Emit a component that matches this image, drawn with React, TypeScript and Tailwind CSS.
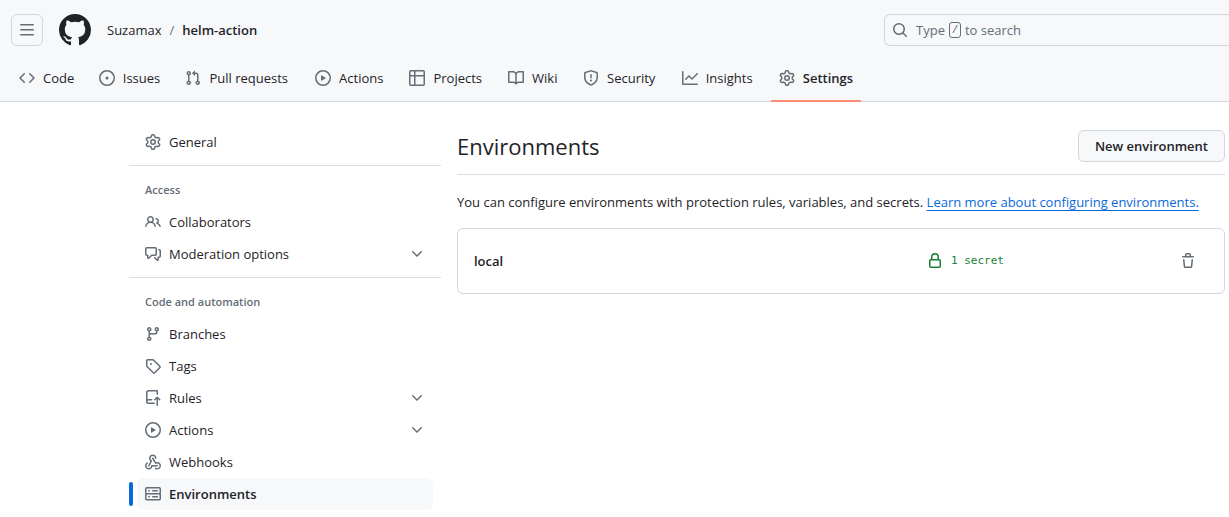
import type { ReactNode } from "react";

const paths = {
  bars: "M1 2.75A.75.75 0 0 1 1.75 2h12.5a.75.75 0 0 1 0 1.5H1.75A.75.75 0 0 1 1 2.75Zm0 5A.75.75 0 0 1 1.75 7h12.5a.75.75 0 0 1 0 1.5H1.75A.75.75 0 0 1 1 7.75ZM1.75 12h12.5a.75.75 0 0 1 0 1.5H1.75a.75.75 0 0 1 0-1.5Z",
  github: "M8 0c4.42 0 8 3.58 8 8a8.013 8.013 0 0 1-5.45 7.59c-.4.08-.55-.17-.55-.38 0-.27.01-1.13.01-2.2 0-.75-.25-1.23-.54-1.48 1.78-.2 3.65-.88 3.65-3.95 0-.88-.31-1.59-.82-2.15.08-.2.36-1.02-.08-2.12 0 0-.67-.22-2.2.82-.64-.18-1.32-.27-2-.27-.68 0-1.36.09-2 .27-1.53-1.03-2.2-.82-2.2-.82-.44 1.1-.16 1.92-.08 2.12-.51.56-.82 1.28-.82 2.15 0 3.06 1.86 3.75 3.64 3.95-.23.2-.44.55-.51 1.07-.46.21-1.61.55-2.33-.66-.15-.24-.6-.83-1.23-.82-.67.01-.27.38.01.53.34.19.73.9.82 1.13.16.45.68 1.31 2.69.94 0 .67.01 1.3.01 1.49 0 .21-.15.45-.55.38A7.995 7.995 0 0 1 0 8c0-4.42 3.58-8 8-8Z",
  search: "M10.68 11.74a6 6 0 0 1-7.922-8.982 6 6 0 0 1 8.982 7.922l3.04 3.04a.749.749 0 0 1-.326 1.275.749.749 0 0 1-.734-.215ZM11.5 7a4.499 4.499 0 1 0-8.997 0A4.499 4.499 0 0 0 11.5 7Z",
  code: "m11.28 3.22 4.25 4.25a.75.75 0 0 1 0 1.06l-4.25 4.25a.749.749 0 0 1-1.275-.326.749.749 0 0 1 .215-.734L13.94 8l-3.72-3.72a.749.749 0 0 1 .326-1.275.749.749 0 0 1 .734.215Zm-6.56 0a.751.751 0 0 1 1.042.018.751.751 0 0 1 .018 1.042L2.06 8l3.72 3.72a.749.749 0 0 1-.326 1.275.749.749 0 0 1-.734-.215L.47 8.53a.75.75 0 0 1 0-1.06Z",
  issue: "M8 9.5a1.5 1.5 0 1 0 0-3 1.5 1.5 0 0 0 0 3ZM8 0a8 8 0 1 1 0 16A8 8 0 0 1 8 0ZM1.5 8a6.5 6.5 0 1 0 13 0 6.5 6.5 0 0 0-13 0Z",
  pull: "M1.5 3.25a2.25 2.25 0 1 1 3 2.122v5.256a2.251 2.251 0 1 1-1.5 0V5.372A2.25 2.25 0 0 1 1.5 3.25Zm5.677-.177L9.573.677A.25.25 0 0 1 10 .854V2.5h1A2.5 2.5 0 0 1 13.5 5v5.628a2.251 2.251 0 1 1-1.5 0V5a1 1 0 0 0-1-1h-1v1.646a.25.25 0 0 1-.427.177L7.177 3.427a.25.25 0 0 1 0-.354ZM3.75 2.5a.75.75 0 1 0 0 1.5.75.75 0 0 0 0-1.5Zm0 9.5a.75.75 0 1 0 0 1.5.75.75 0 0 0 0-1.5Zm8.25.75a.75.75 0 1 0 1.5 0 .75.75 0 0 0-1.5 0Z",
  play: "M8 0a8 8 0 1 1 0 16A8 8 0 0 1 8 0ZM1.5 8a6.5 6.5 0 1 0 13 0 6.5 6.5 0 0 0-13 0Zm4.879-2.773 4.264 2.559a.25.25 0 0 1 0 .428l-4.264 2.559A.25.25 0 0 1 6 10.559V5.442a.25.25 0 0 1 .379-.215Z",
  table: "M0 1.75C0 .784.784 0 1.75 0h12.5C15.216 0 16 .784 16 1.75v12.5A1.75 1.75 0 0 1 14.25 16H1.75A1.75 1.75 0 0 1 0 14.25ZM6.5 6.5v8h7.75a.25.25 0 0 0 .25-.25V6.5Zm8-1.5V1.75a.25.25 0 0 0-.25-.25H6.5V5Zm-13 1.5v7.75c0 .138.112.25.25.25H5v-8ZM5 5V1.5H1.75a.25.25 0 0 0-.25.25V5Z",
  book: "M0 1.75A.75.75 0 0 1 .75 1h4.253c1.227 0 2.317.59 3 1.501A3.743 3.743 0 0 1 11.006 1h4.245a.75.75 0 0 1 .75.75v10.5a.75.75 0 0 1-.75.75h-4.507a2.25 2.25 0 0 0-1.591.659l-.622.621a.75.75 0 0 1-1.06 0l-.622-.621A2.25 2.25 0 0 0 5.258 13H.75a.75.75 0 0 1-.75-.75Zm7.251 10.324.004-5.073-.002-2.253A2.25 2.25 0 0 0 5.003 2.5H1.5v9h3.757a3.75 3.75 0 0 1 1.994.574ZM8.755 4.75l-.004 7.322a3.752 3.752 0 0 1 1.992-.572H14.5v-9h-3.495a2.25 2.25 0 0 0-2.25 2.25Z",
  shield: "M7.467.133a1.748 1.748 0 0 1 1.066 0l5.25 1.68A1.75 1.75 0 0 1 15 3.48V7c0 1.566-.32 3.182-1.303 4.682-.983 1.498-2.585 2.813-5.032 3.855a1.697 1.697 0 0 1-1.33 0c-2.447-1.042-4.049-2.357-5.032-3.855C1.32 10.182 1 8.566 1 7V3.48a1.75 1.75 0 0 1 1.217-1.667Zm.61 1.429a.25.25 0 0 0-.153 0l-5.25 1.68a.25.25 0 0 0-.174.238V7c0 1.358.275 2.666 1.057 3.86.784 1.194 2.121 2.34 4.366 3.297a.196.196 0 0 0 .154 0c2.245-.956 3.582-2.104 4.366-3.298C13.225 9.666 13.5 8.36 13.5 7V3.48a.251.251 0 0 0-.174-.237l-5.25-1.68ZM8.75 4.75v3a.75.75 0 0 1-1.5 0v-3a.75.75 0 0 1 1.5 0ZM9 10.5a1 1 0 1 1-2 0 1 1 0 0 1 2 0Z",
  graph: "M1.5 1.75V13.5h13.75a.75.75 0 0 1 0 1.5H.75a.75.75 0 0 1-.75-.75V1.75a.75.75 0 0 1 1.5 0Zm14.28 2.53-5.25 5.25a.75.75 0 0 1-1.06 0L7 7.06 4.28 9.78a.751.751 0 0 1-1.042-.018.751.751 0 0 1-.018-1.042l3.25-3.25a.75.75 0 0 1 1.06 0L10 7.94l4.72-4.72a.751.751 0 0 1 1.042.018.751.751 0 0 1 .018 1.042Z",
  gear: "M8 0a8.2 8.2 0 0 1 .701.031C9.444.095 9.99.645 10.16 1.29l.288 1.107c.018.066.079.158.212.224.231.114.454.243.668.386.123.082.233.09.299.071l1.103-.303c.644-.176 1.392.021 1.82.63.27.385.506.792.704 1.218.315.675.111 1.422-.364 1.891l-.814.806c-.049.048-.098.147-.088.294.016.257.016.515 0 .772-.01.147.038.246.088.294l.814.806c.475.469.679 1.216.364 1.891a7.977 7.977 0 0 1-.704 1.217c-.428.61-1.176.807-1.82.63l-1.102-.302c-.067-.019-.177-.011-.3.071a5.909 5.909 0 0 1-.668.386c-.133.066-.194.158-.211.224l-.29 1.106c-.168.646-.715 1.196-1.458 1.26a8.006 8.006 0 0 1-1.402 0c-.743-.064-1.289-.614-1.458-1.26l-.289-1.106c-.018-.066-.079-.158-.212-.224a5.738 5.738 0 0 1-.668-.386c-.123-.082-.233-.09-.299-.071l-1.103.303c-.644.176-1.392-.021-1.82-.63a8.12 8.12 0 0 1-.704-1.218c-.315-.675-.111-1.422.363-1.891l.815-.806c.05-.048.098-.147.088-.294a6.214 6.214 0 0 1 0-.772c.01-.147-.038-.246-.088-.294l-.815-.806C.635 6.045.431 5.298.746 4.623a7.92 7.92 0 0 1 .704-1.217c.428-.61 1.176-.807 1.82-.63l1.102.302c.067.019.177.011.3-.071.214-.143.437-.272.668-.386.133-.066.194-.158.211-.224l.29-1.106C6.009.645 6.556.095 7.299.03 7.53.01 7.764 0 8 0Zm-.571 1.525c-.036.003-.108.036-.137.146l-.289 1.105c-.147.561-.549.967-.998 1.189-.173.086-.34.183-.5.29-.417.278-.97.423-1.529.27l-1.103-.303c-.109-.03-.175.016-.195.045-.22.312-.412.644-.573.99-.014.031-.021.11.059.19l.815.806c.411.406.562.957.53 1.456a4.709 4.709 0 0 0 0 .582c.032.499-.119 1.05-.53 1.456l-.815.806c-.081.08-.073.159-.059.19.162.346.353.677.573.989.02.03.085.076.195.046l1.102-.303c.56-.153 1.113-.008 1.53.27.161.107.328.204.501.29.447.222.85.629.997 1.189l.289 1.105c.029.109.101.143.137.146a6.6 6.6 0 0 0 1.142 0c.036-.003.108-.036.137-.146l.289-1.105c.147-.561.549-.967.998-1.189.173-.086.34-.183.5-.29.417-.278.97-.423 1.529-.27l1.103.303c.109.029.175-.016.195-.045.22-.313.411-.644.573-.99.014-.031.021-.11-.059-.19l-.815-.806c-.411-.406-.562-.957-.53-1.456a4.709 4.709 0 0 0 0-.582c-.032-.499.119-1.05.53-1.456l.815-.806c.081-.08.073-.159.059-.19a6.464 6.464 0 0 0-.573-.989c-.02-.03-.085-.076-.195-.046l-1.102.303c-.56.153-1.113.008-1.53-.27a4.44 4.44 0 0 0-.501-.29c-.447-.222-.85-.629-.997-1.189l-.289-1.105c-.029-.11-.101-.143-.137-.146a6.6 6.6 0 0 0-1.142 0ZM11 8a3 3 0 1 1-6 0 3 3 0 0 1 6 0ZM9.5 8a1.5 1.5 0 1 0-3.001.001A1.5 1.5 0 0 0 9.5 8Z",
  people: "M2 5.5a3.5 3.5 0 1 1 5.898 2.549 5.508 5.508 0 0 1 3.034 4.084.75.75 0 1 1-1.482.235 4 4 0 0 0-7.9 0 .75.75 0 0 1-1.482-.236A5.507 5.507 0 0 1 3.102 8.05 3.493 3.493 0 0 1 2 5.5ZM11 4a3.001 3.001 0 0 1 2.22 5.018 5.01 5.01 0 0 1 2.56 3.012.749.749 0 0 1-.885.954.752.752 0 0 1-.549-.514 3.507 3.507 0 0 0-2.522-2.372.75.75 0 0 1-.574-.73v-.352a.75.75 0 0 1 .416-.672A1.5 1.5 0 0 0 11 5.5.75.75 0 0 1 11 4Zm-5.5-.5a2 2 0 1 0-.001 3.999A2 2 0 0 0 5.5 3.5Z",
  discussion: "M1.75 1h8.5c.966 0 1.75.784 1.75 1.75v5.5A1.75 1.75 0 0 1 10.25 10H7.061l-2.574 2.573A1.458 1.458 0 0 1 2 11.543V10h-.25A1.75 1.75 0 0 1 0 8.25v-5.5C0 1.784.784 1 1.75 1ZM1.5 2.75v5.5c0 .138.112.25.25.25h1a.75.75 0 0 1 .75.75v2.19l2.72-2.72a.749.749 0 0 1 .53-.22h3.5a.25.25 0 0 0 .25-.25v-5.5a.25.25 0 0 0-.25-.25h-8.5a.25.25 0 0 0-.25.25Zm13 2a.25.25 0 0 0-.25-.25h-.5a.75.75 0 0 1 0-1.5h.5c.966 0 1.75.784 1.75 1.75v5.5A1.75 1.75 0 0 1 14.25 12H14v1.543a1.458 1.458 0 0 1-2.487 1.03L9.22 12.28a.749.749 0 0 1 .326-1.275.749.749 0 0 1 .734.215l2.22 2.22v-2.19a.75.75 0 0 1 .75-.75h1a.25.25 0 0 0 .25-.25Z",
  chevron: "M12.78 5.22a.749.749 0 0 1 0 1.06l-4.25 4.25a.749.749 0 0 1-1.06 0L3.22 6.28a.749.749 0 1 1 1.06-1.06L8 8.939l3.72-3.719a.749.749 0 0 1 1.06 0Z",
  branch: "M9.5 3.25a2.25 2.25 0 1 1 3 2.122V6A2.5 2.5 0 0 1 10 8.5H6a1 1 0 0 0-1 1v1.128a2.251 2.251 0 1 1-1.5 0V5.372a2.25 2.25 0 1 1 1.5 0v1.836A2.493 2.493 0 0 1 6 7h4a1 1 0 0 0 1-1v-.628A2.25 2.25 0 0 1 9.5 3.25Zm-6 0a.75.75 0 1 0 1.5 0 .75.75 0 0 0-1.5 0Zm8.25-.75a.75.75 0 1 0 0 1.5.75.75 0 0 0 0-1.5ZM4.25 12a.75.75 0 1 0 0 1.5.75.75 0 0 0 0-1.5Z",
  tag: "M1 7.775V2.75C1 1.784 1.784 1 2.75 1h5.025c.464 0 .91.184 1.238.513l6.25 6.25a1.75 1.75 0 0 1 0 2.474l-5.026 5.026a1.75 1.75 0 0 1-2.474 0l-6.25-6.25A1.752 1.752 0 0 1 1 7.775Zm1.5 0c0 .066.026.13.073.177l6.25 6.25a.25.25 0 0 0 .354 0l5.025-5.025a.25.25 0 0 0 0-.354l-6.25-6.25a.25.25 0 0 0-.177-.073H2.75a.25.25 0 0 0-.25.25ZM6 5a1 1 0 1 1 0 2 1 1 0 0 1 0-2Z",
  push: "M1 2.5A2.5 2.5 0 0 1 3.5 0h8.75a.75.75 0 0 1 .75.75v3.5a.75.75 0 0 1-1.5 0V1.5h-8a1 1 0 0 0-1 1v6.708A2.493 2.493 0 0 1 3.5 9h3.25a.75.75 0 0 1 0 1.5H3.5a1 1 0 0 0 0 2h5.75a.75.75 0 0 1 0 1.5H3.5A2.5 2.5 0 0 1 1 11.5Zm13.23 7.79h-.001l-1.224-1.224v6.184a.75.75 0 0 1-1.5 0V9.066L10.28 10.29a.75.75 0 0 1-1.06-1.061l2.505-2.504a.75.75 0 0 1 1.06 0L15.29 9.23a.751.751 0 0 1-.018 1.042.751.751 0 0 1-1.042.018Z",
  webhook: "M5.5 4.25a2.25 2.25 0 0 1 4.5 0 .75.75 0 0 0 1.5 0 3.75 3.75 0 1 0-6.14 2.889l-2.272 4.258a.75.75 0 0 0 1.324.706L7 7.25a.75.75 0 0 0-.309-1.015A2.25 2.25 0 0 1 5.5 4.25ZM7.364 3.607a.75.75 0 0 1 1.03.257l2.608 4.349a3.75 3.75 0 1 1-.628 6.785.75.75 0 0 1 .752-1.299 2.25 2.25 0 1 0-.033-3.88.75.75 0 0 1-1.03-.256L7.107 4.636a.75.75 0 0 1 .257-1.03ZM2.9 8.776A.75.75 0 0 1 2.625 9.8 2.25 2.25 0 1 0 6 11.75a.75.75 0 0 1 .75-.751h5.5a.75.75 0 0 1 0 1.5H7.425a3.751 3.751 0 1 1-5.55-3.998.75.75 0 0 1 1.024.274Z",
  server: "M1.75 1h12.5c.966 0 1.75.784 1.75 1.75v4c0 .372-.116.717-.314 1 .198.283.314.628.314 1v4a1.75 1.75 0 0 1-1.75 1.75H1.75A1.75 1.75 0 0 1 0 12.75v-4c0-.358.109-.707.314-1a1.739 1.739 0 0 1-.314-1v-4C0 1.784.784 1 1.75 1ZM1.5 2.75v4c0 .138.112.25.25.25h12.5a.25.25 0 0 0 .25-.25v-4a.25.25 0 0 0-.25-.25H1.75a.25.25 0 0 0-.25.25Zm.25 5.75a.25.25 0 0 0-.25.25v4c0 .138.112.25.25.25h12.5a.25.25 0 0 0 .25-.25v-4a.25.25 0 0 0-.25-.25ZM7 4.75A.75.75 0 0 1 7.75 4h4.5a.75.75 0 0 1 0 1.5h-4.5A.75.75 0 0 1 7 4.75ZM7.75 10h4.5a.75.75 0 0 1 0 1.5h-4.5a.75.75 0 0 1 0-1.5ZM3 4.75A.75.75 0 0 1 3.75 4h.5a.75.75 0 0 1 0 1.5h-.5A.75.75 0 0 1 3 4.75ZM3.75 10h.5a.75.75 0 0 1 0 1.5h-.5a.75.75 0 0 1 0-1.5Z",
  lock: "M4 4a4 4 0 0 1 8 0v2h.25c.966 0 1.75.784 1.75 1.75v5.5A1.75 1.75 0 0 1 12.25 15h-8.5A1.75 1.75 0 0 1 2 13.25v-5.5C2 6.784 2.784 6 3.75 6H4Zm8.25 3.5h-8.5a.25.25 0 0 0-.25.25v5.5c0 .138.112.25.25.25h8.5a.25.25 0 0 0 .25-.25v-5.5a.25.25 0 0 0-.25-.25ZM10.5 6V4a2.5 2.5 0 1 0-5 0v2Z",
  trash: "M11 1.75V3h2.25a.75.75 0 0 1 0 1.5H2.75a.75.75 0 0 1 0-1.5H5V1.75C5 .784 5.784 0 6.75 0h2.5C10.216 0 11 .784 11 1.75ZM4.496 6.675l.66 6.6a.25.25 0 0 0 .249.225h5.19a.25.25 0 0 0 .249-.225l.66-6.6a.75.75 0 0 1 1.492.149l-.66 6.6A1.748 1.748 0 0 1 10.595 15h-5.19a1.75 1.75 0 0 1-1.741-1.575l-.66-6.6a.75.75 0 1 1 1.492-.15ZM6.5 1.75V3h3V1.75a.25.25 0 0 0-.25-.25h-2.5a.25.25 0 0 0-.25.25Z",
};

type IconName = keyof typeof paths;

function Icon({ name, className = "size-4 text-[#656d76]" }: { name: IconName; className?: string }) {
  return (
    <svg viewBox="0 0 16 16" fill="currentColor" aria-hidden="true" className={`shrink-0 ${className}`}>
      <path d={paths[name]} />
    </svg>
  );
}

const tabs: { label: string; icon: IconName; active?: boolean }[] = [
  { label: "Code", icon: "code" },
  { label: "Issues", icon: "issue" },
  { label: "Pull requests", icon: "pull" },
  { label: "Actions", icon: "play" },
  { label: "Projects", icon: "table" },
  { label: "Wiki", icon: "book" },
  { label: "Security", icon: "shield" },
  { label: "Insights", icon: "graph" },
  { label: "Settings", icon: "gear", active: true },
];

function Header() {
  return (
    <header className="border-b border-[#d0d7de] bg-[#f6f8fa]">
      <div className="flex items-center pt-[14px] pl-[11px]">
        <button
          type="button"
          aria-label="Open menu"
          className="flex size-8 items-center justify-center rounded-md border border-[#d0d7de]"
        >
          <Icon name="bars" />
        </button>
        <a href="#home" aria-label="Homepage" className="ml-4">
          <Icon name="github" className="size-8 text-[#1f2328]" />
        </a>
        <nav aria-label="Breadcrumb" className="ml-4 flex items-center gap-2">
          <a href="#owner">Suzamax</a>
          <span className="text-[#656d76]">/</span>
          <a href="#repo" className="font-semibold">
            helm-action
          </a>
        </nav>
        <button
          type="button"
          className="ml-auto flex h-8 w-[345px] items-center rounded-l-md border border-r-0 border-[#d0d7de] pl-[7px] text-[#656d76]"
        >
          <Icon name="search" />
          <span className="ml-2 flex items-center gap-1">
            Type
            <kbd className="flex h-4 w-3 items-center justify-center rounded-[3px] border border-[#656d76] text-[11px]">
              /
            </kbd>
            to search
          </span>
        </button>
      </div>
      <nav aria-label="Repository" className="-mb-px flex h-14 gap-2 pl-[11px]">
        {tabs.map((t) => (
          <a
            key={t.label}
            href={`#${t.label.toLowerCase()}`}
            className={`flex items-center gap-2 border-b-2 px-2 pt-[10px] whitespace-nowrap ${
              t.active ? "border-[#fd8c73] font-semibold" : "border-transparent"
            }`}
          >
            <Icon name={t.icon} />
            {/* The hidden semibold copy keeps a tab's width the same when it is selected. */}
            <span
              data-label={t.label}
              className="after:invisible after:block after:h-0 after:overflow-hidden after:font-semibold after:content-[attr(data-label)]"
            >
              {t.label}
            </span>
          </a>
        ))}
      </nav>
    </header>
  );
}

function SideItem({
  icon,
  label,
  expandable,
  active,
}: {
  icon: IconName;
  label: string;
  expandable?: boolean;
  active?: boolean;
}) {
  const body = (
    <>
      <Icon name={icon} />
      <span className="flex-1 text-left">{label}</span>
      {expandable && <Icon name="chevron" />}
    </>
  );
  return (
    <li className="relative px-2">
      {active && <span className="absolute top-1 left-0 h-6 w-1 rounded-md bg-[#0969da]" />}
      {expandable ? (
        <button type="button" className="flex h-8 w-full items-center gap-2 rounded-md px-2">
          {body}
        </button>
      ) : (
        <a
          href={`#${label.toLowerCase()}`}
          className={`flex h-8 items-center gap-2 rounded-md px-2 ${active ? "bg-[#f6f8fa] font-semibold" : ""}`}
        >
          {body}
        </a>
      )}
    </li>
  );
}

function SideSection({ title, children }: { title: string; children: ReactNode }) {
  return (
    <section className="mt-[7px] border-t border-[#d8dee4]">
      <h2 className="px-4 pt-4 pb-2 text-[11px] leading-4 font-semibold text-[#656d76]">{title}</h2>
      <ul>{children}</ul>
    </section>
  );
}

export default function App() {
  return (
    <div className="min-h-screen bg-white font-['Open_Sans','Noto_Sans',sans-serif] text-[13px] leading-5 text-[#1f2328]">
      <Header />
      <div className="flex items-start gap-4 pt-6 pr-1 pl-[129px]">
        <nav aria-label="Settings" className="w-[312px] shrink-0">
          <ul>
            <SideItem icon="gear" label="General" />
          </ul>
          <SideSection title="Access">
            <SideItem icon="people" label="Collaborators" />
            <SideItem icon="discussion" label="Moderation options" expandable />
          </SideSection>
          <SideSection title="Code and automation">
            <SideItem icon="branch" label="Branches" />
            <SideItem icon="tag" label="Tags" />
            <SideItem icon="push" label="Rules" expandable />
            <SideItem icon="play" label="Actions" expandable />
            <SideItem icon="webhook" label="Webhooks" />
            <SideItem icon="server" label="Environments" active />
          </SideSection>
        </nav>
        <main className="min-w-0 flex-1 pt-1">
          <div className="flex items-center justify-between border-b border-[#d8dee4] pb-3">
            <h1 className="text-[22px] leading-8">Environments</h1>
            <button
              type="button"
              className="h-8 rounded-md border border-[#d0d7de] bg-[#f6f8fa] px-4 font-semibold"
            >
              New environment
            </button>
          </div>
          <p className="mt-[17px]">
            You can configure environments with protection rules, variables, and secrets.{" "}
            <a href="#docs" className="text-[#0969da] underline underline-offset-3">
              Learn more about configuring environments.
            </a>
          </p>
          <div className="mt-4 flex h-[66px] items-center rounded-md border border-[#d0d7de] pr-7 pl-4">
            <a href="#local" className="flex-1 font-semibold">
              local
            </a>
            <span className="flex w-[253px] items-center gap-2 font-['DejaVu_Sans_Mono',monospace] text-[11px] text-[#1a7f37]">
              <Icon name="lock" className="size-4" />1 secret
            </span>
            <button type="button" aria-label="Delete environment">
              <Icon name="trash" />
            </button>
          </div>
        </main>
      </div>
    </div>
  );
}
